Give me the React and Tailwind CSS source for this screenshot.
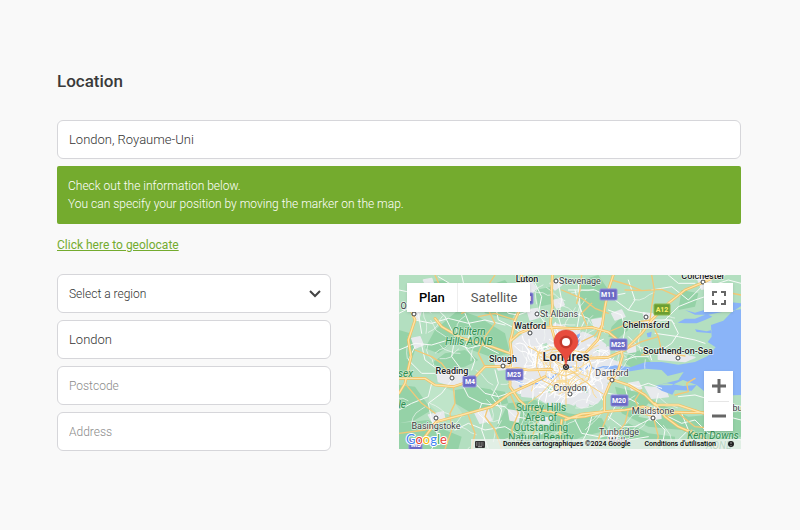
import React, { useState } from "react";

const WOODS = [
  "M190 120 L250 140 L330 190 L345 250 L290 262 L230 240 L180 215 L130 250 L90 235 L120 180Z",
  "M12 345 L60 350 L110 420 L60 450 L12 460Z",
  "M12 460 L100 450 L150 480 L200 500 L190 537 L12 537Z",
  "M12 180 L45 190 L60 240 L40 300 L12 310Z",
  "M240 60 L330 30 L380 90 L350 150 L270 130Z",
  "M340 400 L420 390 L520 430 L620 445 L640 480 L560 500 L480 537 L330 537 L300 480Z",
  "M660 350 L740 370 L790 400 L880 440 L1038 425 L1038 500 L930 520 L860 480 L760 470 L680 430Z",
  "M560 30 L610 15 L640 60 L620 140 L570 150 L550 90Z",
  "M650 170 L680 140 L700 180 L670 205 L640 200Z",
  "M150 250 L210 240 L250 270 L210 290 L150 300 L110 280Z",
  "M180 360 L240 350 L330 365 L340 400 L290 410 L230 430 L180 400Z",
  "M700 250 L740 240 L770 280 L720 300 L690 280Z",
  "M620 500 L700 460 L760 490 L840 500 L840 537 L600 537Z",
  "M420 60 L470 50 L480 100 L430 110Z",
  "M860 60 L910 70 L900 110 L850 120Z",
  "M80 40 L150 30 L180 70 L130 110 L90 90Z",
];

const FIELDS = [
  "M110 340 L180 365 L180 400 L210 440 L130 430 L100 400Z",
  "M380 470 L430 455 L450 490 L400 510Z",
  "M760 400 L800 420 L780 450 L730 440Z",
  "M210 170 L240 180 L230 210 L195 200Z",
  "M940 450 L1000 445 L1010 470 L950 480Z",
];

const TOWNS = [
  "M378 40 L410 35 L425 55 L405 75 L375 65Z",
  "M465 40 L492 25 L500 45 L480 60Z",
  "M470 92 L500 85 L508 105 L485 115Z",
  "M396 120 L428 115 L432 142 L405 150Z",
  "M375 180 L430 175 L440 205 L400 212Z",
  "M295 270 L350 265 L360 295 L310 300Z",
  "M125 305 L215 300 L225 330 L180 350 L130 335Z",
  "M100 435 L145 425 L150 450 L115 460Z",
  "M745 128 L775 132 L778 160 L750 165Z",
  "M905 20 L945 15 L950 50 L920 58Z",
  "M790 245 L850 250 L900 262 L870 275 L790 268Z",
  "M750 350 L810 355 L820 380 L770 385Z",
  "M755 420 L795 415 L798 445 L765 450Z",
  "M640 485 L670 490 L665 515 L640 510Z",
  "M50 205 L75 200 L85 225 L60 235Z",
  "M85 30 L110 25 L118 48 L95 52Z",
  "M60 105 L80 120 L70 150 L52 140Z",
  "M240 430 L280 420 L290 450 L255 460Z",
  "M340 420 L375 425 L370 455 L345 450Z",
  "M590 150 L620 145 L625 170 L600 175Z",
  "M650 130 L680 120 L690 140 L660 150Z",
  "M700 340 L730 335 L740 355 L710 360Z",
  "M430 440 L470 445 L460 465 L435 460Z",
  "M690 230 L720 225 L722 245 L700 248Z",
];

const LONDON =
  "M360 215 L395 190 L450 180 L480 165 L550 185 L600 205 L640 235 L640 270 L680 285 L690 310 L640 330 L625 370 L605 395 L560 410 L520 395 L470 405 L430 380 L380 375 L350 340 L360 290 L345 250Z";

const WATER = [
  "M1038 108 L1008 128 L985 152 L948 165 L950 200 L938 216 L962 232 L938 258 L900 276 L850 284 L800 276 L752 276 L706 292 L660 286 L625 296 L660 298 L706 304 L752 296 L800 300 L818 318 L866 306 L850 330 L790 345 L830 346 L864 330 L905 345 L945 378 L1038 375Z",
  "M848 158 L870 146 L900 146 L936 132 L952 140 L930 150 L905 160 L870 160Z",
  "M870 120 L900 128 L935 118 L950 105 L1000 96 L1038 100 L1038 118 L1000 122 L940 134 L900 134Z",
  "M780 348 L815 340 L865 348 L905 345 L890 362 L840 360 L832 374 L800 362Z",
  "M900 178 L935 184 L950 180 L950 190 L905 186Z",
  "M755 190 L770 185 L768 200 L758 202Z",
  "M372 345 L382 348 L378 362Z",
  "M545 195 L555 190 L552 225 L544 232Z",
];

const MOTORWAYS = [
  "M380 15 L372 60 L378 110 L360 150 L352 190 L345 215",
  "M472 15 L470 60 L472 110 L466 160 L480 210 L492 240",
  "M655 15 L640 60 L630 110 L622 165 L608 210 L575 245",
  "M345 215 L372 190 L420 170 L470 172 L540 176 L590 172 L640 186 L675 215 L682 260 L670 300 L645 340 L628 380 L628 425 L570 440 L520 444 L470 425 L400 415 L372 390 L345 350 L345 300 L350 250Z",
  "M12 325 L90 325 L120 345 L175 350 L230 332 L270 290 L330 290 L400 300 L470 298",
  "M60 537 L90 500 L124 455 L200 435 L290 410 L345 370 L400 345 L450 320",
  "M628 425 L560 432 L510 450",
  "M628 425 L690 420 L745 410 L800 425 L880 428 L925 428",
  "M640 325 L700 345 L750 375 L780 405 L850 405 L925 430",
  "M565 265 L640 262 L690 240 L740 190 L770 150 L820 100 L870 60 L930 35 L970 15",
  "M345 250 L290 230 L200 205 L140 170 L120 145",
  "M60 60 L40 100 L60 150 L40 210 L48 260 L30 340 L12 370",
  "M780 400 L810 440 L850 470 L920 500 L970 537",
  "M500 450 L495 490 L505 537",
];

const MAIN_ROADS = [
  "M500 60 L560 85 L600 115 L640 130",
  "M590 100 L560 130 L575 165",
  "M770 15 L778 60 L770 110 L765 150 L790 200 L800 245",
  "M690 60 L740 62 L800 58 L850 80",
  "M650 30 L700 45 L740 62",
  "M765 150 L700 160 L640 186",
  "M790 200 L740 215 L690 240",
  "M740 255 L800 245 L870 258",
  "M280 410 L270 440 L300 480 L320 537",
  "M430 415 L425 460 L400 537",
  "M640 430 L620 480 L600 537",
  "M700 420 L690 460 L660 500",
  "M175 350 L180 400 L165 430 L170 480 L150 537",
  "M30 340 L80 400 L120 430",
  "M124 455 L90 480 L12 490",
  "M170 320 L140 280 L110 260 L60 240",
  "M270 290 L250 250 L270 200 L300 160 L280 120",
  "M300 15 L270 60 L240 110 L200 130",
  "M360 150 L300 130 L250 140",
  "M620 165 L600 195 L560 215",
  "M810 440 L850 430 L900 470 L1000 480",
  "M740 360 L720 390 L740 430 L775 440 L790 500 L780 537",
  "M890 480 L870 537",
  "M345 370 L370 430 L350 480 L370 537",
  "M120 15 L140 60 L120 110",
  "M220 435 L240 490 L230 537",
  "M925 35 L960 60 L1038 75",
  "M560 15 L555 60 L545 100",
  "M840 375 L880 365 L875 340 L900 325",
];

const LANES = [
  "M12 60 L60 70 L100 50 L160 70 L220 60 L270 75",
  "M100 50 L110 100 L150 140 L180 200 L170 260 L200 300",
  "M60 150 L110 160 L160 145 L220 160 L270 150 L330 165",
  "M12 240 L60 220 L110 225 L160 210 L220 235 L260 225 L310 250",
  "M80 225 L90 270 L130 300 L160 310",
  "M60 230 L40 270 L80 310 L120 310",
  "M210 130 L230 180 L210 230 L240 270 L230 300",
  "M300 100 L310 150 L350 170 L380 190",
  "M12 420 L50 400 L100 380 L110 340",
  "M170 330 L140 370 L100 400 L110 450 L130 500 L110 537",
  "M200 340 L220 380 L260 400 L250 430 L280 460",
  "M240 340 L270 370 L310 380 L340 370",
  "M260 400 L330 410 L360 440 L420 450 L480 440",
  "M180 480 L220 460 L270 480 L330 470 L380 500 L440 490",
  "M270 430 L260 480 L280 537",
  "M300 300 L310 340 L290 380 L320 420 L310 460",
  "M540 450 L560 490 L610 500 L660 495 L700 510 L760 500",
  "M590 440 L580 480 L550 537",
  "M640 440 L680 470 L720 470 L760 450",
  "M690 350 L700 390 L660 410 L640 450",
  "M790 370 L780 410 L770 440 L810 480 L800 537",
  "M820 440 L860 460 L900 450 L940 490 L1038 510",
  "M860 430 L880 480 L850 510",
  "M420 40 L440 80 L430 130 L450 160",
  "M410 120 L370 135 L340 130 L320 100",
  "M430 130 L490 140 L540 130 L580 145",
  "M490 40 L500 90 L490 140 L500 175",
  "M520 60 L600 60 L640 80 L690 70",
  "M540 60 L550 100 L570 150 L555 180",
  "M550 40 L556 120 L545 180",
  "M660 90 L700 120 L750 130 L770 150",
  "M640 120 L680 135 L690 180 L680 230",
  "M700 30 L720 90 L700 120",
  "M770 60 L830 50 L880 90 L920 50",
  "M780 150 L830 150 L850 190 L830 220 L800 240",
  "M780 190 L850 200 L900 210 L930 220",
  "M700 200 L730 230 L760 240 L770 270",
  "M690 270 L720 260 L760 260",
  "M810 150 L850 110 L900 90 L960 70",
  "M940 50 L1000 30 L1038 40",
  "M820 15 L850 40 L900 40",
  "M12 130 L50 110 L70 130 L80 190",
  "M130 20 L180 50 L190 100 L230 120",
  "M200 15 L210 60 L260 90",
  "M700 340 L730 350 L760 340 L800 355",
  "M640 370 L690 380 L730 400",
  "M850 380 L900 375 L950 390 L1038 410",
  "M930 440 L960 430 L1038 450",
];

// small deterministic generator so that the streets never move between renders
function makeStreets(cx, cy, rx, ry, count, step) {
  let seed = 17;
  const next = () => {
    seed = (seed * 16807) % 2147483647;
    return seed / 2147483647;
  };
  const out = [];
  for (let i = 0; i < count; i++) {
    const angle = next() * Math.PI * 2;
    const dist = Math.sqrt(next());
    let x = cx + Math.cos(angle) * rx * dist;
    let y = cy + Math.sin(angle) * ry * dist;
    let heading = next() * Math.PI * 2;
    let d = `M${x.toFixed(0)} ${y.toFixed(0)}`;
    for (let j = 0; j < 4; j++) {
      heading += (next() - 0.5) * 1.2;
      x += Math.cos(heading) * step;
      y += Math.sin(heading) * step;
      d += ` L${x.toFixed(0)} ${y.toFixed(0)}`;
    }
    out.push(d);
  }
  return out.join(" ");
}

const CITY_STREETS = makeStreets(505, 295, 125, 90, 120, 13);
const CITY_AVENUES = makeStreets(510, 295, 85, 65, 34, 14);
const COUNTRY_STREETS = makeStreets(450, 300, 460, 270, 85, 17);

const BIG_TOWNS = [
  { name: "Luton", x: 128, y: 7 },
  { name: "Watford", x: 131, y: 54, dot: [131, 58] },
  { name: "Slough", x: 104, y: 87, dot: [104, 91] },
  { name: "Reading", x: 53, y: 99, dot: [53, 103] },
  { name: "Chelmsford", x: 247, y: 53, dot: [247, 42] },
  { name: "Southend-on-Sea", x: 279, y: 79, dot: [279, 83] },
  { name: "Colchester", x: 304, y: 4, dot: [304, 7] },
];

const SMALL_TOWNS = [
  { name: "Stevenage", x: 181, y: 9, dot: [157, 6] },
  { name: "St Albans", x: 160, y: 42, dot: [138, 39] },
  { name: "Dartford", x: 213, y: 101, dot: [213, 105] },
  { name: "Croydon", x: 171, y: 116, dot: [171, 119] },
  { name: "Maidstone", x: 254, y: 139, dot: [254, 143] },
  { name: "Basingstoke", x: 37, y: 154, dot: [37, 143] },
  { name: "Tunbridge", x: 220, y: 160 },
  { name: "Wells", x: 220, y: 169 },
  { name: "Oxford", x: 15, y: 34, dot: [15, 39] },
  { name: "Canterbury", x: 329, y: 136 },
];

const PARKS = [
  { name: "Chiltern", x: 70, y: 60 },
  { name: "Hills AONB", x: 70, y: 70 },
  { name: "Kent Downs", x: 314, y: 164 },
  { name: "AONB", x: 320, y: 174 },
  { name: "Wessex", x: 14, y: 102, end: true },
  { name: "Vale", x: 7, y: 133, end: true },
];

const SHIELDS = [
  { name: "M11", x: 201, y: 14 },
  { name: "M25", x: 211, y: 64 },
  { name: "M25", x: 107, y: 94 },
  { name: "M4", x: 63, y: 101 },
  { name: "M20", x: 212, y: 120 },
  { name: "M3", x: 9, y: 164 },
  { name: "M1", x: 120, y: 18 },
];

function Label({ item, className, size, halo = "#ffffff" }) {
  return (
    <text
      x={item.x}
      y={item.y}
      textAnchor={item.end ? "end" : "middle"}
      className={className}
      fontSize={size}
      stroke={halo}
      strokeWidth="1.5"
      strokeOpacity="0.7"
      strokeLinejoin="round"
      paintOrder="stroke"
    >
      {item.name}
    </text>
  );
}

function MapDrawing() {
  return (
    <svg viewBox="0 0 342 174" preserveAspectRatio="xMidYMid slice" className="block h-full w-full" role="img" aria-label="Map of London">
      <g transform="scale(0.33333) translate(-12 -15)" fill="none" strokeLinejoin="round" strokeLinecap="round">
        <rect x="12" y="15" width="1026" height="522" fill="#b3dfc0" />
        <path d={WOODS.join(" ")} fill="#95d2a7" />
        <path d={FIELDS.join(" ")} fill="#bfe5c9" />
        <path d={TOWNS.join(" ")} fill="#e8eaed" stroke="#e8eaed" strokeWidth="4" />
        <path d={LONDON} fill="#e6e8ec" stroke="#e6e8ec" strokeWidth="12" strokeDasharray="30 14" />
        <path d="M440 225 L455 218 L462 235 L448 240Z M455 350 L475 345 L478 365 L460 368Z M600 240 L612 236 L614 250Z M560 360 L575 355 L578 370Z" fill="#b3dfc0" />
        <path d={WATER.join(" ")} fill="#8ab4f8" />
        <path d="M360 330 L395 345 L430 340 L450 320 L470 325 L490 305 L520 292 L550 290 L565 305 L580 285 L600 298 L625 290 L660 292" stroke="#8ab4f8" strokeWidth="4" />
        <path d={COUNTRY_STREETS} stroke="#f3f8f5" strokeWidth="2" clipPath="url(#land)" />
        <path d={LANES.join(" ")} stroke="#f7faf8" strokeWidth="3" />
        <path d={CITY_STREETS} stroke="#ffffff" strokeWidth="3" />
        <path d={CITY_AVENUES} stroke="#fbdc97" strokeWidth="3" />
        <path d="M430 250 L470 238 L530 240 L575 250 L590 290 L580 330 L540 350 L480 350 L440 330 L425 290Z M465 270 L510 262 L545 275 L545 305 L510 318 L470 308Z M513 290 L513 410 M513 290 L480 210 M513 290 L400 230 M513 290 L590 350 L625 372 M513 290 L440 370 L400 400" stroke="#f8d07e" strokeWidth="3" />
        <path d={MAIN_ROADS.join(" ")} stroke="#f3c877" strokeWidth="4" />
        <path d={MOTORWAYS.join(" ")} stroke="#f4bf5e" strokeWidth="8" />
        <path d={MOTORWAYS.join(" ")} stroke="#fde4a8" strokeWidth="4" />
        <clipPath id="land">
          <path d="M12 15 H940 L840 110 L840 260 L740 300 L780 380 L1038 400 V537 H12Z" />
        </clipPath>
      </g>

      <g className="font-['Roboto',sans-serif]">
        {[...BIG_TOWNS, ...SMALL_TOWNS].filter((t) => t.dot).map((t) => (
          <circle key={t.name} cx={t.dot[0]} cy={t.dot[1]} r="2" fill="#ffffff" stroke="#3c4043" strokeWidth="1" />
        ))}
        {PARKS.map((p) => (
          <Label key={p.name} item={p} size="10" className="fill-[#2f8d50] italic" halo="#c9ead2" />
        ))}
        {["Surrey Hills", "Area of", "Outstanding", "Natural Beauty"].map((line, i) => (
          <Label key={line} item={{ name: line, x: 142, y: 136 + i * 10 }} size="10" className="fill-[#2f8d50]" halo="#c9ead2" />
        ))}
        {SHIELDS.map((s) => (
          <g key={`${s.name}-${s.x}`}>
            <rect x={s.x - (s.name.length > 2 ? 0 : -1)} y={s.y} width={s.name.length > 2 ? 17 : 13} height="11" rx="1" fill="#6a69c4" stroke="#8f8fdb" strokeWidth="1" />
            <text x={s.x + 8} y={s.y + 8} textAnchor="middle" fontSize="7" className="fill-white font-bold">{s.name}</text>
          </g>
        ))}
        <rect x="255" y="29" width="16" height="11" rx="1" fill="#6b9e32" stroke="#8bb84f" strokeWidth="1" />
        <text x="263" y="37" textAnchor="middle" fontSize="7" className="fill-[#fff06a] font-bold">A12</text>
        {SMALL_TOWNS.map((t) => (
          <Label key={t.name} item={t} size="9" className="fill-[#3c4043]" />
        ))}
        {BIG_TOWNS.map((t) => (
          <Label key={t.name} item={t} size="9" className="fill-[#202124] font-medium" />
        ))}
        <Label item={{ name: "Londres", x: 167, y: 86 }} size="13" className="fill-[#202124] font-medium" />
      </g>

      <g>
        <circle cx="167" cy="92" r="3" fill="#202124" />
        <circle cx="167" cy="92" r="1.5" fill="none" stroke="#ffffff" strokeWidth="0.5" />
        <path d="M167 91 C166 83 163 79 159 75 C156 72 155 70 155 67 C155 60 160 55 167 55 C174 55 179 60 179 67 C179 70 178 72 175 75 C171 79 168 83 167 91Z" fill="#e84c3d" stroke="#d5402f" strokeWidth="0.5" />
        <circle cx="167" cy="67" r="6.5" fill="#c5392c" />
        <circle cx="167" cy="67" r="4" fill="#ffffff" />
      </g>
    </svg>
  );
}

function GoogleLogo() {
  return (
    <svg width="46" height="18" viewBox="0 0 46 18" role="img" aria-label="Google" className="absolute bottom-0 left-[6px]">
      <text
        x="1"
        y="13"
        fontSize="13"
        stroke="#ffffff"
        strokeWidth="2"
        strokeLinejoin="round"
        paintOrder="stroke"
        className="font-['Lato',sans-serif]"
      >
        <tspan fill="#4285f4">G</tspan>
        <tspan fill="#ea4335">o</tspan>
        <tspan fill="#fbbc04">o</tspan>
        <tspan fill="#4285f4">g</tspan>
        <tspan fill="#34a853">l</tspan>
        <tspan fill="#ea4335">e</tspan>
      </text>
    </svg>
  );
}

function LocationMap() {
  const [mapType, setMapType] = useState("plan");

  return (
    <div className="relative mt-px aspect-[342/174] overflow-hidden bg-[#b3dfc0] font-['Roboto',sans-serif]">
      <MapDrawing />

      <div className="absolute top-2 left-2 flex h-[29px] items-center bg-white text-[13px] shadow">
        <button
          type="button"
          onClick={() => setMapType("plan")}
          className={`h-full border-r border-[#eeeeee] px-3 ${mapType === "plan" ? "font-medium text-black" : "text-[#565656]"}`}
        >
          Plan
        </button>
        <button
          type="button"
          onClick={() => setMapType("satellite")}
          className={`h-full px-[13px] ${mapType === "satellite" ? "font-medium text-black" : "text-[#565656]"}`}
        >
          Satellite
        </button>
      </div>

      <button type="button" aria-label="Toggle fullscreen" className="absolute top-2 right-2 flex size-[29px] items-center justify-center bg-white shadow">
        <svg width="14" height="14" viewBox="0 0 14 14" fill="none" stroke="#666666" strokeWidth="2">
          <path d="M1 5V1H5 M9 1H13V5 M13 9V13H9 M5 13H1V9" />
        </svg>
      </button>

      <div className="absolute right-2 bottom-[18px] flex h-[60px] w-[29px] flex-col bg-white px-1 shadow">
        <button type="button" aria-label="Zoom in" className="flex flex-1 items-center justify-center border-b border-[#e6e6e6]">
          <svg width="14" height="14" viewBox="0 0 14 14" stroke="#666666" strokeWidth="3">
            <path d="M0 7H14 M7 0V14" />
          </svg>
        </button>
        <button type="button" aria-label="Zoom out" className="flex flex-1 items-center justify-center">
          <svg width="14" height="14" viewBox="0 0 14 14" stroke="#666666" strokeWidth="3">
            <path d="M0 7H14" />
          </svg>
        </button>
      </div>

      <GoogleLogo />

      <div className="absolute right-0 bottom-0 flex h-[10px] items-center bg-[#f5f5f5]/70 text-[7px] leading-[10px] font-medium whitespace-nowrap text-black">
        <button type="button" aria-label="Keyboard shortcuts" className="px-1">
          <svg width="10" height="7" viewBox="0 0 10 7">
            <rect width="10" height="7" rx="1" fill="#333333" />
            <path d="M1 2H9 M1 4H9" stroke="#ffffff" strokeWidth="0.6" strokeDasharray="1 0.6" />
            <path d="M3 5.7H7" stroke="#ffffff" strokeWidth="0.6" />
          </svg>
        </button>
        <span className="px-[14px]">Données cartographiques ©2024 Google</span>
        <a href="#terms" className="pr-3">Conditions d'utilisation</a>
        <button type="button" aria-label="Report a map error" className="pr-[7px]">
          <svg width="6" height="6" viewBox="0 0 6 6">
            <circle cx="3" cy="3" r="3" fill="#222222" />
            <path d="M3 1V3 M3 4V5" stroke="#bbbbbb" strokeWidth="0.8" />
          </svg>
        </button>
      </div>
    </div>
  );
}

const fieldClass =
  "block h-[39px] w-full rounded-md border border-[#d6d6da] bg-white px-[11px] font-light text-[#333333] outline-none placeholder:text-[12px] placeholder:text-[#8a8a8a] focus:border-[#74ab2e]";

export default function App() {
  const [search, setSearch] = useState("London, Royaume-Uni");
  const [region, setRegion] = useState("");
  const [city, setCity] = useState("London");
  const [postcode, setPostcode] = useState("");
  const [address, setAddress] = useState("");

  return (
    <main className="min-h-screen bg-[#f9f9f9] pt-[69px] pr-[59px] pb-20 pl-[57px] font-['Roboto',sans-serif] text-[13px]">
      <h1 className="mb-[27px] text-[17px] leading-6 font-medium text-[#3a3a3a]">Location</h1>

      <input type="text" aria-label="Location" value={search} onChange={(e) => setSearch(e.target.value)} className={fieldClass} />

      <div role="status" className="mt-[7px] rounded-xs bg-[#74ab2e] p-[11px] text-[12px] leading-[18px] font-light text-white">
        <p>Check out the information below.</p>
        <p>You can specify your position by moving the marker on the map.</p>
      </div>

      <a href="#geolocate" className="mt-3 block w-fit text-[12px] leading-[18px] text-[#74ab2e] underline">
        Click here to geolocate
      </a>

      <div className="mt-5 flex items-start justify-between">
        <div className="flex w-2/5 flex-col gap-[7px]">
          <div className="relative">
            <select aria-label="Region" value={region} onChange={(e) => setRegion(e.target.value)} className={`${fieldClass} appearance-none text-[12px]`}>
              <option value="">Select a region</option>
              <option value="london">Greater London</option>
              <option value="kent">Kent</option>
            </select>
            <svg width="12" height="8" viewBox="0 0 12 8" fill="none" stroke="#444444" strokeWidth="2" className="pointer-events-none absolute top-4 right-[10px]">
              <path d="M1 1L6 6L11 1" />
            </svg>
          </div>
          <input type="text" aria-label="City" value={city} onChange={(e) => setCity(e.target.value)} className={fieldClass} />
          <input type="text" placeholder="Postcode" aria-label="Postcode" value={postcode} onChange={(e) => setPostcode(e.target.value)} className={fieldClass} />
          <input type="text" placeholder="Address" aria-label="Address" value={address} onChange={(e) => setAddress(e.target.value)} className={fieldClass} />
        </div>

        <div className="w-1/2">
          <LocationMap />
        </div>
      </div>
    </main>
  );
}
